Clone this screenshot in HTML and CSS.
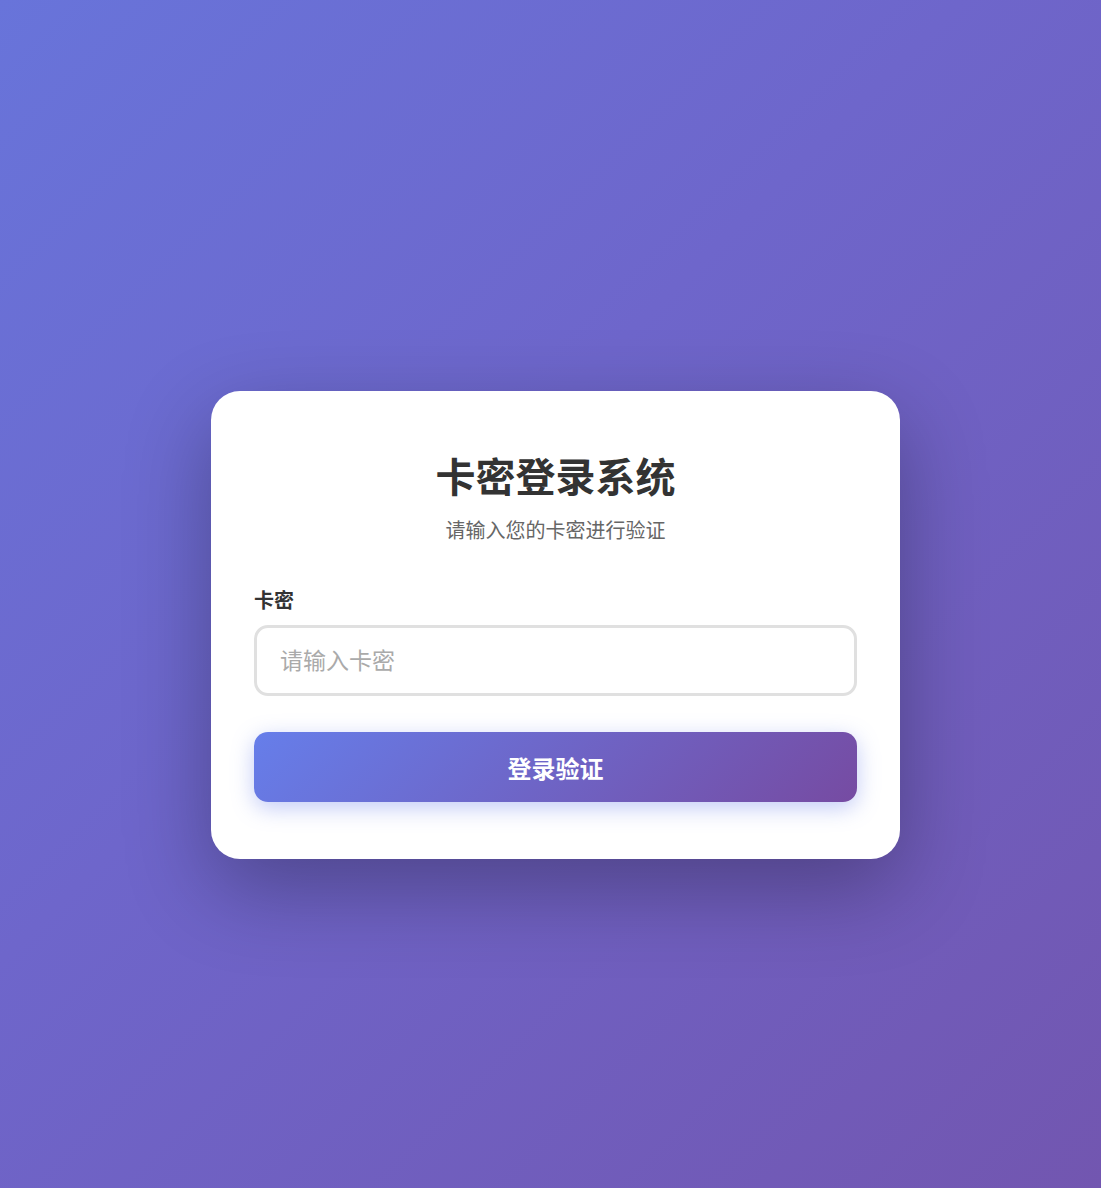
FILE: index.html
```html
<!doctype html>
<html lang="zh-CN">
<head>
  <meta charset="UTF-8">
  <meta name="viewport" content="width=device-width, initial-scale=1.0">
  <title>卡密登录系统</title>
  <link rel="stylesheet" href="styles.css">
</head>
<body>

  <div class="login-container">
    <div class="login-header">
      <h1>卡密登录系统</h1>
      <p>请输入您的卡密进行验证</p>
    </div>

    <form class="login-form" action="#" method="post">
      <div class="form-group">
        <label for="cardKey">卡密</label>
        <input type="text" id="cardKey" name="cardKey" placeholder="请输入卡密" autocomplete="off">
      </div>
      <button type="submit" class="login-btn">登录验证</button>
    </form>
  </div>

</body>
</html>
```
FILE: styles.css
```css
* {
  margin: 0;
  padding: 0;
  box-sizing: border-box;
}

body {
  font-family: "Noto Sans CJK SC", "Liberation Sans", sans-serif;
  background: linear-gradient(135deg, #6874da 0%, #6e66cb 42%, #7256b0 100%);
  min-height: 100vh;
  display: flex;
  justify-content: center;
  align-items: center;
  padding: 62px 20px 0 30px;
}

.login-container {
  background: #fff;
  width: 100%;
  max-width: 689px;
  padding: 57px 43px;
  border-radius: 29px;
  box-shadow: 0 29px 86px rgba(0, 0, 0, 0.3);
}

.login-header {
  text-align: center;
  margin-bottom: 44px;
}

.login-header h1 {
  color: #333;
  font-size: 40px;
  line-height: 55px;
  margin-bottom: 14px;
}

.login-header p {
  color: #666;
  font-size: 20px;
  line-height: 26px;
}

.form-group {
  margin-bottom: 36px;
}

.form-group label {
  display: block;
  color: #333;
  font-size: 20px;
  font-weight: bold;
  line-height: 26px;
  margin-bottom: 12px;
}

.form-group input {
  display: block;
  width: 100%;
  height: 71px;
  padding: 0 23px 4px;
  border: 3px solid #e0e0e0;
  border-radius: 14px;
  font-family: inherit;
  font-size: 23px;
  color: #333;
  outline: none;
}

.form-group input::placeholder {
  color: #aaa;
}

.form-group input:focus {
  border-color: #667eea;
}

.login-btn {
  display: block;
  width: 100%;
  height: 70px;
  border: none;
  border-radius: 14px;
  background: linear-gradient(135deg, #667eea 0%, #764ba2 100%);
  color: #fff;
  font-family: inherit;
  font-size: 24px;
  font-weight: bold;
  cursor: pointer;
  box-shadow: 0 6px 22px rgba(102, 126, 234, 0.4);
}
```
